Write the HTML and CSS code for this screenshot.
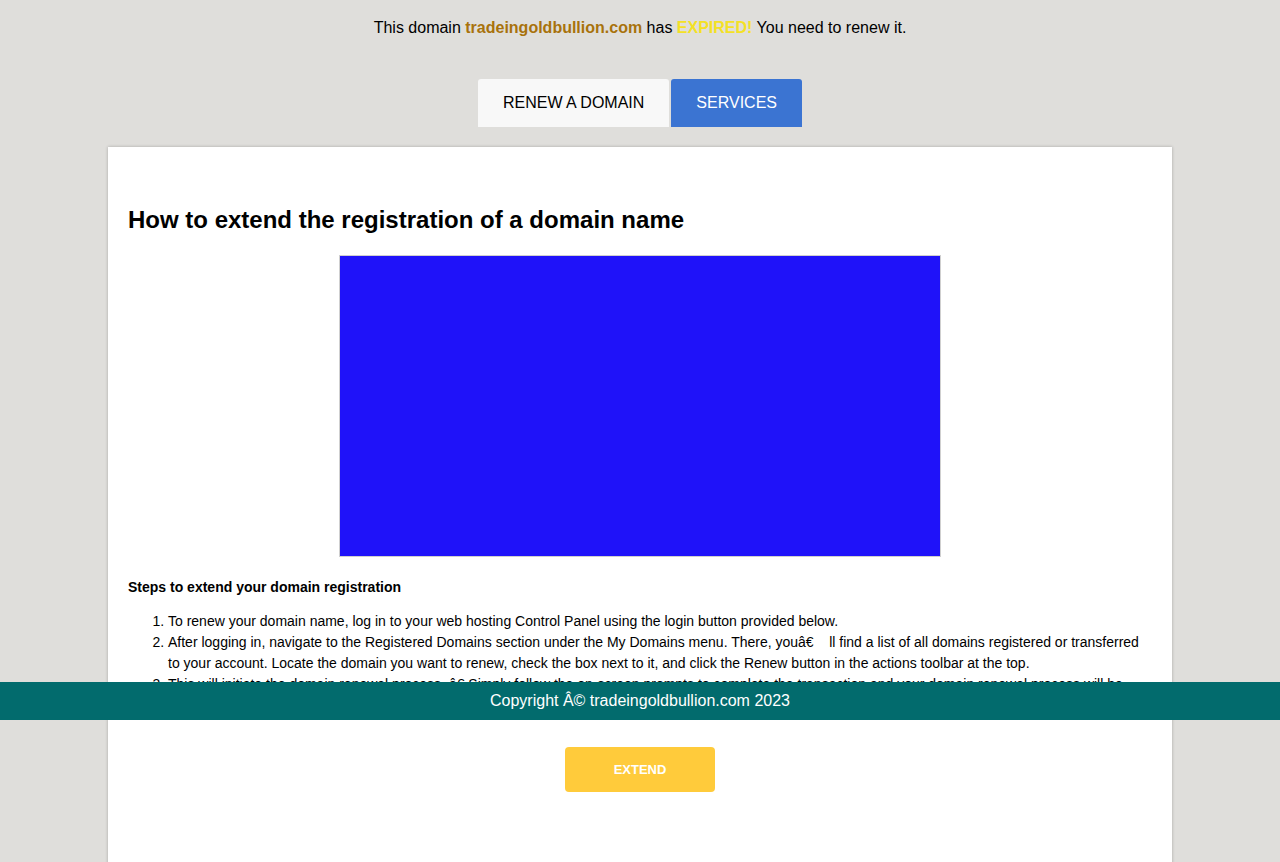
FILE: index.html
```html
<!DOCTYPE html>
<html lang="en">
<head>
<meta charset="utf-8">
<title>tradeingoldbullion.com</title>
<link rel="stylesheet" href="styles.css">
</head>
<body>
<div class="notice">This domain <span class="domain">tradeingoldbullion.com</span> has <span class="expired">EXPIRED!</span> You need to renew it.</div>
<div class="tabs">
  <div class="tab tab-active">RENEW A DOMAIN</div>
  <div class="tab tab-blue">SERVICES</div>
</div>
<div class="card">
  <h2 class="title">How to extend the registration of a domain name</h2>
  <div class="picture"></div>
  <p class="steps-title">Steps to extend your domain registration</p>
  <ol class="steps">
    <li>To renew your domain name, log in to your web hosting Control Panel using the login button provided below.</li>
    <li>After logging in, navigate to the Registered Domains section under the My Domains menu. There, youâ€&nbsp;&nbsp;&nbsp;&nbsp;ll find a list of all domains registered or transferred to your account. Locate the domain you want to renew, check the box next to it, and click the Renew button in the actions toolbar at the top.</li>
    <li>This will initiate the domain renewal process. â€ Simply follow the on-screen prompts to complete the transaction and your domain renewal process will be completed, keeping your website online without interruption.</li>
  </ol>
  <div class="action"><a class="extend" href="#">EXTEND</a></div>
</div>
<div class="footer">Copyright Â© tradeingoldbullion.com 2023</div>
</body>
</html>
```

FILE: styles.css
```css
html, body {
  margin: 0;
  padding: 0;
}
body {
  background: #dfdedb;
  font-family: "Liberation Sans", Arial, sans-serif;
  color: #000;
}
.notice {
  text-align: center;
  font-size: 16px;
  line-height: 20px;
  padding: 18px 0 0;
  height: 79px;
  box-sizing: border-box;
}
.domain {
  color: #a8720c;
  font-weight: bold;
}
.expired {
  color: #f4e125;
  font-weight: bold;
}
.tabs {
  display: flex;
  justify-content: center;
  gap: 2px;
  height: 48px;
}
.tab {
  height: 48px;
  line-height: 48px;
  padding: 0 25px;
  font-size: 16px;
  border-radius: 3px 3px 0 0;
}
.tab-active {
  background: #f8f8f8;
  color: #000;
}
.tab-blue {
  background: #3b74d2;
  color: #fff;
}
.card {
  width: 1064px;
  box-sizing: border-box;
  margin: 20px auto 0;
  background: #fff;
  padding: 59px 20px 100px;
  box-shadow: 0 0 3px rgba(0, 0, 0, 0.25);
}
.title {
  margin: 0;
  font-size: 24px;
  line-height: 28px;
  font-weight: bold;
}
.picture {
  width: 600px;
  height: 300px;
  background: #1f12f9;
  border: 1px solid #cfcfcf;
  margin: 21px auto 0;
}
.steps-title {
  margin: 22px 0 0;
  font-size: 14px;
  line-height: 16px;
  font-weight: bold;
}
.steps {
  margin: 16px 0 0;
  padding-left: 40px;
  font-size: 14px;
  line-height: 21px;
}
.action {
  display: flex;
  justify-content: center;
  margin-top: 31px;
}
.extend {
  display: block;
  width: 150px;
  height: 45px;
  line-height: 45px;
  text-align: center;
  background: #ffcb3b;
  color: #fff;
  font-weight: bold;
  font-size: 13px;
  text-decoration: none;
  border-radius: 4px;
}
.footer {
  position: fixed;
  left: 0;
  right: 0;
  top: 682px;
  height: 38px;
  line-height: 38px;
  background: #026b6d;
  color: #fff;
  text-align: center;
  font-size: 16px;
}
```
